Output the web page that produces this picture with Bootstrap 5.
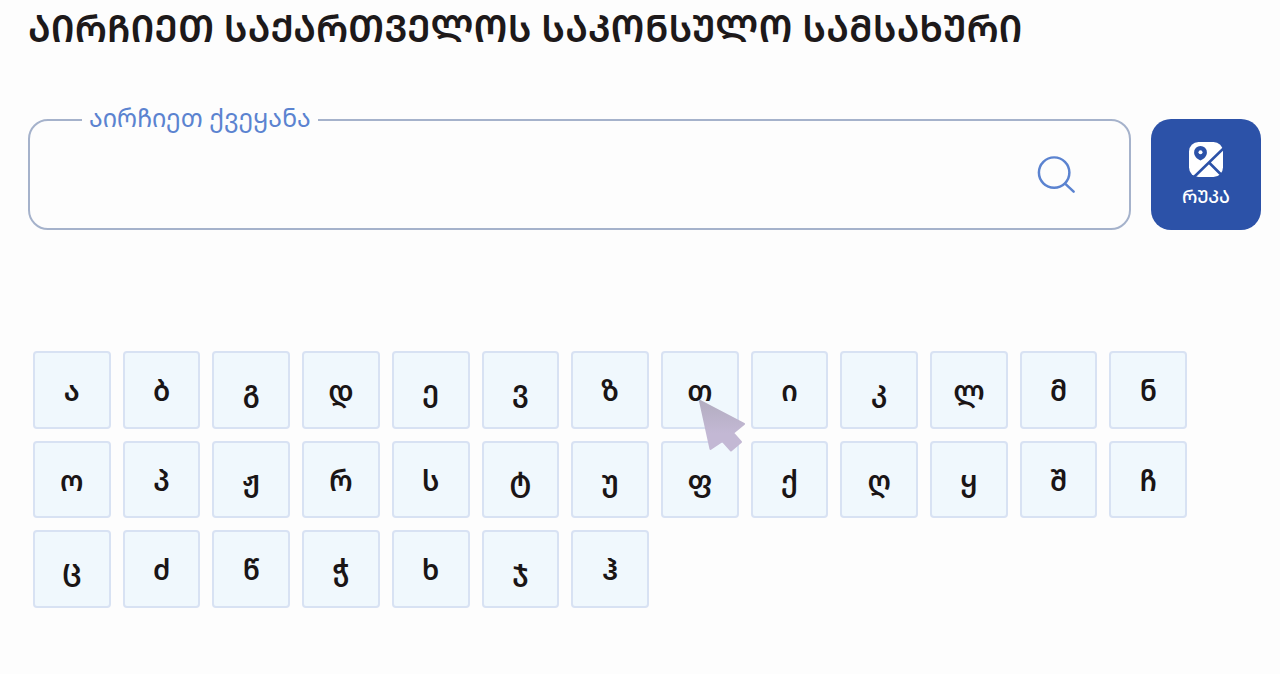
<!DOCTYPE html>
<html lang="ka">
<head>
<meta charset="utf-8">
<meta name="viewport" content="width=device-width, initial-scale=1">
<title>საკონსულო სამსახური</title>
<link href="https://cdn.jsdelivr.net/npm/bootstrap@5.3.0/dist/css/bootstrap.min.css" rel="stylesheet">
<style>
body{background:#fdfdfd;color:#1d191a;font-family:"Noto Sans Georgian","DejaVu Sans",sans-serif}
.page{padding:4px 19px 64px 28px}
.page-title{font-size:37px;line-height:48px;font-weight:650;margin:0 0 67px}
.search-row{gap:20px;margin-bottom:121px}
.search-field{height:111px;border:2px solid #a5b2cb;border-radius:20px;background:transparent;padding:0 112px 0 60px;font-size:25px}
.search-label{left:54px;top:-22px;padding:0 7px;background:#fdfdfd;color:#5b83d0;font-size:25px;line-height:40px}
.search-btn{right:54px;top:35px;width:40px;height:42px;color:#5b83d0}
.map-btn{width:110px;height:111px;border-radius:20px;background:#2c52a8;color:#fff;font-size:18px;line-height:24px;font-weight:500;gap:6px}
.map-btn:hover{background:#25468f;color:#fff}
.letters{display:grid;grid-template-columns:repeat(13,1fr);gap:12px;margin:0 74px 0 5px}
.letter{aspect-ratio:1;border:2px solid #d8e2f3;border-radius:4px;background:#f0f8fd;color:#1a1516;font-size:28px;line-height:40px;font-weight:650}
.pointer{left:35px;top:46px;z-index:2;pointer-events:none}
@media (max-width:900px){.letters{grid-template-columns:repeat(auto-fill,minmax(64px,1fr));margin-right:5px}}
</style>
</head>
<body>
<main class="container-fluid page">
  <h1 class="page-title">ᲐᲘᲠᲩᲘᲔᲗ ᲡᲐᲥᲐᲠᲗᲕᲔᲚᲝᲡ ᲡᲐᲙᲝᲜᲡᲣᲚᲝ ᲡᲐᲛᲡᲐᲮᲣᲠᲘ</h1>
  <form class="search-row d-flex">
    <div class="position-relative flex-grow-1">
      <input class="search-field w-100 d-block" type="text" id="country">
      <label class="search-label position-absolute text-nowrap" for="country">აირჩიეთ ქვეყანა</label>
      <button class="search-btn btn border-0 p-0 position-absolute d-flex" type="submit" aria-label="ძიება">
        <svg width="42" height="42" viewBox="0 0 42 42" fill="none" stroke="currentColor" stroke-width="2.6" stroke-linecap="round"><circle cx="18" cy="18.500" r="16"/><path d="M29.500 30 38.500 38.500"/></svg>
      </button>
    </div>
    <button class="map-btn btn border-0 p-0 flex-shrink-0 d-flex flex-column align-items-center justify-content-center" type="button">
      <svg width="36" height="36" viewBox="0 0 36 36"><rect x="1" y="0" width="34" height="35" rx="9.500" fill="#fff"/><g fill="none" stroke="#2c52a8" stroke-width="2.600"><path d="M6 35 36 6M21 20.500l13 13"/></g><path fill="#2c52a8" d="M12.500 4a6.400 6.400 0 0 1 6.400 6.400c0 3.500-2.600 6.300-6.400 8-3.800-1.700-6.400-4.500-6.400-8A6.400 6.400 0 0 1 12.500 4z"/><circle cx="12.500" cy="10.200" r="2" fill="#fff"/></svg>
      <span>ᲠᲣᲙᲐ</span>
    </button>
  </form>
  <div class="letters">
    <button class="letter btn p-0">ა</button>
    <button class="letter btn p-0">ბ</button>
    <button class="letter btn p-0">გ</button>
    <button class="letter btn p-0">დ</button>
    <button class="letter btn p-0">ე</button>
    <button class="letter btn p-0">ვ</button>
    <button class="letter btn p-0">ზ</button>
    <button class="letter btn p-0 position-relative">თ<svg class="pointer position-absolute" width="50" height="54" viewBox="0 0 50 54"><defs><linearGradient id="pointerFill" x1="0" y1="0" x2="0" y2="1"><stop offset="0" stop-color="#b3adc0"/><stop offset=".65" stop-color="#c3b8d4"/></linearGradient></defs><path d="M2 2 46 25 35 34 43 43 33 51.500 24.500 42 12.500 50z" fill="url(#pointerFill)" stroke="url(#pointerFill)" stroke-width="2" stroke-linejoin="round"/></svg></button>
    <button class="letter btn p-0">ი</button>
    <button class="letter btn p-0">კ</button>
    <button class="letter btn p-0">ლ</button>
    <button class="letter btn p-0">მ</button>
    <button class="letter btn p-0">ნ</button>
    <button class="letter btn p-0">ო</button>
    <button class="letter btn p-0">პ</button>
    <button class="letter btn p-0">ჟ</button>
    <button class="letter btn p-0">რ</button>
    <button class="letter btn p-0">ს</button>
    <button class="letter btn p-0">ტ</button>
    <button class="letter btn p-0">უ</button>
    <button class="letter btn p-0">ფ</button>
    <button class="letter btn p-0">ქ</button>
    <button class="letter btn p-0">ღ</button>
    <button class="letter btn p-0">ყ</button>
    <button class="letter btn p-0">შ</button>
    <button class="letter btn p-0">ჩ</button>
    <button class="letter btn p-0">ც</button>
    <button class="letter btn p-0">ძ</button>
    <button class="letter btn p-0">წ</button>
    <button class="letter btn p-0">ჭ</button>
    <button class="letter btn p-0">ხ</button>
    <button class="letter btn p-0">ჯ</button>
    <button class="letter btn p-0">ჰ</button>
  </div>
</main>
<script src="https://cdn.jsdelivr.net/npm/bootstrap@5.3.0/dist/js/bootstrap.bundle.min.js"></script>
</body>
</html>
